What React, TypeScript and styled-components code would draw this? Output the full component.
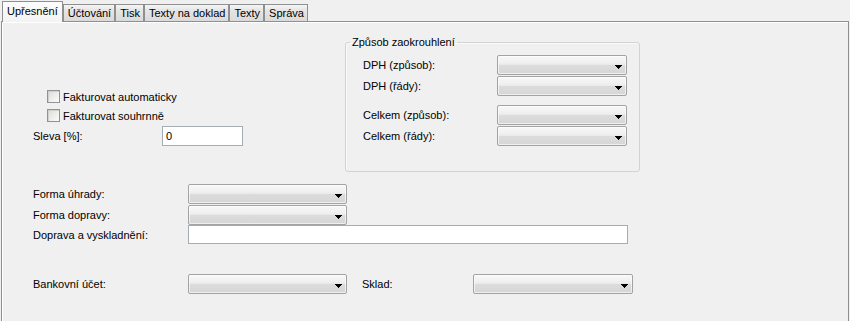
import React from "react";
import styled, { createGlobalStyle } from "styled-components";

const Global = createGlobalStyle`
  html, body { margin: 0; padding: 0; background: #f0f0f0; }
  body { font-family: "Liberation Sans", Arial, sans-serif; font-size: 11px; color: #000; }
  #root { width: 850px; height: 321px; overflow: hidden; }
  * { box-sizing: border-box; }
`;

const Window = styled.div`
  width: 850px;
  height: 321px;
  display: flex;
  flex-direction: column;
  background: #f0f0f0;
`;

const TabBar = styled.div`
  display: flex;
  align-items: flex-end;
  height: 21px;
  padding-left: 2px;
  position: relative;
  z-index: 1;
`;

const Tab = styled.div<{ $active?: boolean }>`
  display: flex;
  align-items: center;
  white-space: nowrap;
  border: 1px solid #8e8f8f;
  border-bottom: none;
  ${(p) =>
    p.$active
      ? `
    height: 21px;
    margin-bottom: -1px;
    padding: 0 4px 3px 4px;
    background: linear-gradient(to bottom, #fdfdfd 0%, #f6f6f6 60%, #f3f3f3 100%);
  `
      : `
    height: 17px;
    padding: 0 3px 1px 4px;
    background: linear-gradient(to bottom, #f6f6f6 0%, #e6e6e6 30%, #dadada 100%);
  `}
`;

const Panel = styled.div`
  flex: 1;
  margin: 0 1px 0 1px;
  border: 1px solid #8e8f8f;
  border-bottom: none;
  box-shadow: inset 1px 1px 0 #ffffff;
  display: flex;
  flex-direction: column;
`;

const TopSection = styled.div`
  display: flex;
  padding-top: 14px;
`;

const LeftCol = styled.div`
  width: 343px;
  padding-top: 51px;
  display: flex;
  flex-direction: column;
`;

const CheckRow = styled.label`
  display: flex;
  align-items: center;
  height: 19px;
  padding-left: 45px;
  gap: 3px;
`;

const CheckBox = styled.span`
  width: 13px;
  height: 13px;
  border: 1px solid #8f9394;
  background: linear-gradient(135deg, #d9d9d6 0%, #eeeeec 55%, #fbfbfb 100%);
  box-shadow: inset 1px 1px 0 #d0d0cc;
`;

const FieldRow = styled.div<{ $pad?: number; $mt?: number }>`
  display: flex;
  align-items: center;
  padding-left: ${(p) => p.$pad ?? 31}px;
  margin-top: ${(p) => p.$mt ?? 0}px;
`;

const Label = styled.span<{ $w: number; $ml?: number }>`
  width: ${(p) => p.$w}px;
  margin-left: ${(p) => p.$ml ?? 0}px;
  flex: none;
  white-space: nowrap;
`;

const TextInput = styled.input<{ $w: number; $h?: number }>`
  width: ${(p) => p.$w}px;
  height: ${(p) => p.$h ?? 20}px;
  border: 1px solid #a5acb2;
  background: #fff;
  font: inherit;
  padding: 0 3px;
  margin: 0;
  outline: none;
  color: #000;
`;

const GroupBox = styled.fieldset`
  width: 295px;
  margin: 0;
  padding: 0 0 25px 0;
  border: 1px solid #d3d3d3;
  border-radius: 3px;
  box-shadow: inset 1px 1px 0 #fafafa;
`;

const Legend = styled.legend`
  margin-left: 4px;
  padding: 0 2px;
  line-height: 13px;
`;

const GroupBody = styled.div`
  padding: 6px 0 0 0;
  display: flex;
  flex-direction: column;
`;

const Stack = styled.div<{ $mt?: number }>`
  display: flex;
  flex-direction: column;
  gap: 1px;
  margin-top: ${(p) => p.$mt ?? 0}px;
`;

const SelectBox = styled.div<{ $w: number }>`
  width: ${(p) => p.$w}px;
  height: 20px;
  flex: none;
  border: 1px solid #a3a3a3;
  border-radius: 2px;
  background: linear-gradient(
    to bottom,
    #f8f8f8 0%,
    #efefef 40%,
    #e9e9e9 48%,
    #dcdcdc 52%,
    #d6d6d6 100%
  );
  box-shadow: inset 0 0 0 1px rgba(255, 255, 255, 0.6);
  display: flex;
  align-items: center;
  justify-content: flex-end;
  padding: 4px 4px 0 0;
`;

const LowerSection = styled.div`
  margin-top: 12px;
  display: flex;
  flex-direction: column;
`;

const Arrow = () => (
  <svg width="7" height="4" viewBox="0 0 7 4" shapeRendering="crispEdges">
    <rect x="0" y="0" width="7" height="1" fill="#000" />
    <rect x="1" y="1" width="5" height="1" fill="#000" />
    <rect x="2" y="2" width="3" height="1" fill="#000" />
    <rect x="3" y="3" width="1" height="1" fill="#000" />
  </svg>
);

const Select = ({ w }: { w: number }) => (
  <SelectBox $w={w}>
    <Arrow />
  </SelectBox>
);

const tabs = ["Upřesnění", "Účtování", "Tisk", "Texty na doklad", "Texty", "Správa"];

export default function App() {
  return (
    <>
      <Global />
      <Window>
        <TabBar>
          {tabs.map((t, i) => (
            <Tab key={t} $active={i === 0}>
              {t}
            </Tab>
          ))}
        </TabBar>
        <Panel>
          <TopSection>
            <LeftCol>
              <CheckRow>
                <CheckBox />
                Fakturovat automaticky
              </CheckRow>
              <CheckRow>
                <CheckBox />
                Fakturovat souhrnně
              </CheckRow>
              <FieldRow $mt={1}>
                <Label $w={129}>Sleva [%]:</Label>
                <TextInput $w={81} readOnly value="0" />
              </FieldRow>
            </LeftCol>
            <GroupBox>
              <Legend>Způsob zaokrouhlení</Legend>
              <GroupBody>
                <Stack>
                  <FieldRow $pad={17}>
                    <Label $w={134}>DPH (způsob):</Label>
                    <Select w={130} />
                  </FieldRow>
                  <FieldRow $pad={17}>
                    <Label $w={134}>DPH (řády):</Label>
                    <Select w={130} />
                  </FieldRow>
                </Stack>
                <Stack $mt={9}>
                  <FieldRow $pad={17}>
                    <Label $w={134}>Celkem (způsob):</Label>
                    <Select w={130} />
                  </FieldRow>
                  <FieldRow $pad={17}>
                    <Label $w={134}>Celkem (řády):</Label>
                    <Select w={130} />
                  </FieldRow>
                </Stack>
              </GroupBody>
            </GroupBox>
          </TopSection>
          <LowerSection>
            <Stack>
              <FieldRow>
                <Label $w={155}>Forma úhrady:</Label>
                <Select w={159} />
              </FieldRow>
              <FieldRow>
                <Label $w={155}>Forma dopravy:</Label>
                <Select w={159} />
              </FieldRow>
            </Stack>
            <FieldRow>
              <Label $w={155}>Doprava a vyskladnění:</Label>
              <TextInput $w={440} $h={19} readOnly value="" />
            </FieldRow>
            <FieldRow $mt={30}>
              <Label $w={155}>Bankovní účet:</Label>
              <Select w={159} />
              <Label $w={111} $ml={15}>
                Sklad:
              </Label>
              <Select w={160} />
            </FieldRow>
          </LowerSection>
        </Panel>
      </Window>
    </>
  );
}
